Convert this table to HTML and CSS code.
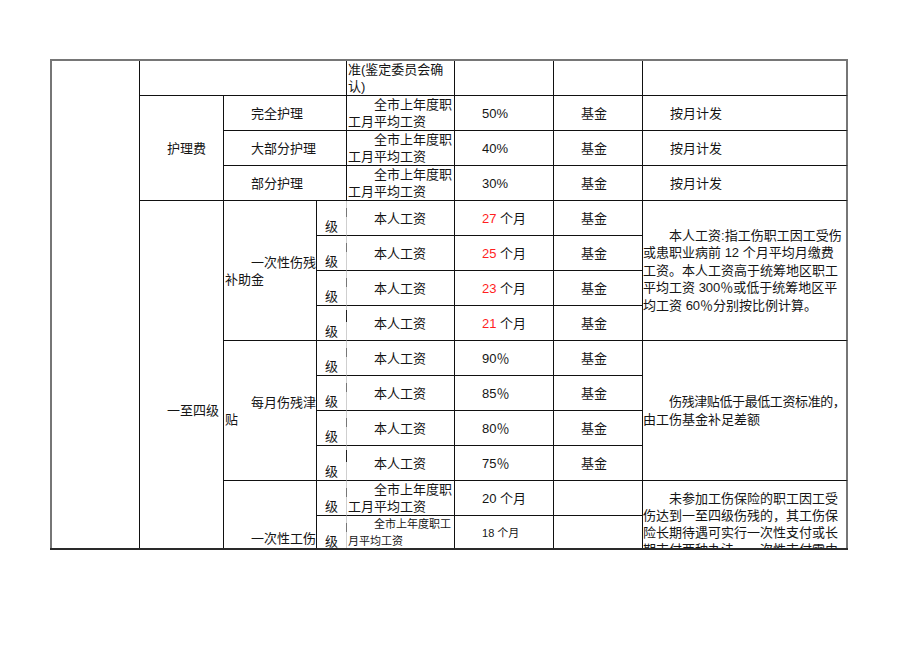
FILE: index.html
```html
<!DOCTYPE html>
<html lang="zh-CN">
<head>
<meta charset="utf-8">
<title>工伤待遇表</title>
<link rel="stylesheet" href="styles.css">
</head>
<body>
<div class="page">
  <div class="sheet">
    <table class="grid">
      <colgroup>
        <col class="c1"><col class="c2"><col class="c3"><col class="c4">
        <col class="c5"><col class="c6"><col class="c7"><col class="c8">
      </colgroup>
      <tbody>
        <tr class="r1">
          <td rowspan="16"></td>
          <td colspan="3"></td>
          <td class="cont">准(鉴定委员会确<br>认)</td>
          <td></td>
          <td></td>
          <td class="last"></td>
        </tr>
        <tr>
          <td rowspan="3">护理费</td>
          <td colspan="2">完全护理</td>
          <td>全市上年度职<br>工月平均工资</td>
          <td>50%</td>
          <td>基金</td>
          <td class="last">按月计发</td>
        </tr>
        <tr>
          <td colspan="2">大部分护理</td>
          <td>全市上年度职<br>工月平均工资</td>
          <td>40%</td>
          <td>基金</td>
          <td class="last">按月计发</td>
        </tr>
        <tr>
          <td colspan="2">部分护理</td>
          <td>全市上年度职<br>工月平均工资</td>
          <td>30%</td>
          <td>基金</td>
          <td class="last">按月计发</td>
        </tr>
        <tr>
          <td rowspan="12">一至四级</td>
          <td rowspan="4">一次性伤残<br>补助金</td>
          <td class="lv">级</td>
          <td>本人工资</td>
          <td><span class="red">27</span> 个月</td>
          <td>基金</td>
          <td rowspan="4" class="last note">本人工资:指工伤职工因工受伤<br>或患职业病前 12 个月平均月缴费<br>工资。本人工资高于统筹地区职工<br>平均工资 300％或低于统筹地区平<br>均工资 60％分别按比例计算。</td>
        </tr>
        <tr>
          <td class="lv">级</td>
          <td>本人工资</td>
          <td><span class="red">25</span> 个月</td>
          <td>基金</td>
        </tr>
        <tr>
          <td class="lv">级</td>
          <td>本人工资</td>
          <td><span class="red">23</span> 个月</td>
          <td>基金</td>
        </tr>
        <tr>
          <td class="lv dk">级</td>
          <td>本人工资</td>
          <td><span class="red">21</span> 个月</td>
          <td>基金</td>
        </tr>
        <tr>
          <td rowspan="4">每月伤残津<br>贴</td>
          <td class="lv">级</td>
          <td>本人工资</td>
          <td>90％</td>
          <td>基金</td>
          <td rowspan="4" class="last note"><span class="tight">伤残津贴低于最低工资标准的，</span><br>由工伤基金补足差额</td>
        </tr>
        <tr>
          <td class="lv">级</td>
          <td>本人工资</td>
          <td>85％</td>
          <td>基金</td>
        </tr>
        <tr>
          <td class="lv">级</td>
          <td>本人工资</td>
          <td>80％</td>
          <td>基金</td>
        </tr>
        <tr>
          <td class="lv dk">级</td>
          <td>本人工资</td>
          <td>75％</td>
          <td>基金</td>
        </tr>
        <tr>
          <td rowspan="4" class="low">一次性工伤</td>
          <td class="lv">级</td>
          <td>全市上年度职<br>工月平均工资</td>
          <td>20 个月</td>
          <td></td>
          <td rowspan="4" class="last note note3">未参加工伤保险的职工因工受<br>伤达到一至四级伤残的，其工伤保<br>险长期待遇可实行一次性支付或长<br>期支付两种办法，一次性支付需由</td>
        </tr>
        <tr>
          <td class="lv">级</td>
          <td class="sm">全市上年度职工<br>月平均工资</td>
          <td class="sm">18 个月</td>
          <td></td>
        </tr>
        <tr>
          <td class="lv"></td>
          <td></td>
          <td></td>
          <td></td>
        </tr>
        <tr>
          <td class="lv"></td>
          <td></td>
          <td></td>
          <td></td>
        </tr>
      </tbody>
    </table>
  </div>
</div>
</body>
</html>
```

FILE: styles.css
```css
html, body {
  margin: 0;
  background: #ffffff;
}

body {
  font-family: "Liberation Sans", "Noto Sans CJK SC", sans-serif;
  font-size: 13px;
  line-height: 17px;
  color: #151515;
}

.page {
  padding: 59px 0 0 50px;
}

.sheet {
  width: 798px;
  height: 489px;
  overflow: hidden;
  border-bottom: 2px solid #2a2a2a;
}

.grid {
  border-collapse: separate;
  border-spacing: 0;
  table-layout: fixed;
  width: 798px;
  border-top: 2px solid #767676;
  border-left: 2px solid #767676;
}

.c1 { width: 88px; }
.c2 { width: 84px; }
.c3 { width: 93px; }
.c4 { width: 30px; }
.c5 { width: 108px; }
.c6 { width: 99px; }
.c7 { width: 89px; }
.c8 { width: 205px; }

.grid tr { height: 35px; }
.grid tr.r1 { height: 34px; }

.grid td {
  box-sizing: border-box;
  border-right: 1px solid #111;
  border-bottom: 1px solid #111;
  padding: 0 0 0 1px;
  text-indent: 26px;
  white-space: nowrap;
  vertical-align: middle;
}

.grid td.last {
  border-right: 2px solid #767676;
}

.grid td.cont {
  text-indent: 0;
  vertical-align: top;
}

.grid td.lv {
  position: relative;
  padding-left: 8px;
  text-indent: 0;
  vertical-align: bottom;
  border-right-color: #cfcfcf;
}

.grid td.lv::after {
  content: "";
  position: absolute;
  right: -1px;
  top: 7px;
  width: 1px;
  height: 9px;
  background: #777;
}

.grid td.lv.dk::after {
  top: 4px;
  height: 12px;
  background: #222;
}

.grid td.sm {
  font-size: 11px;
  line-height: 17px;
}

.grid td.note {
  padding-left: 0;
  line-height: 17.5px;
}

.grid td.note3 {
  vertical-align: top;
  padding-top: 9px;
  line-height: 17px;
}

.grid td.low {
  vertical-align: top;
  padding-top: 49px;
}

.tight {
  letter-spacing: -0.4px;
}

.red {
  color: #ff1f1f;
}
```
